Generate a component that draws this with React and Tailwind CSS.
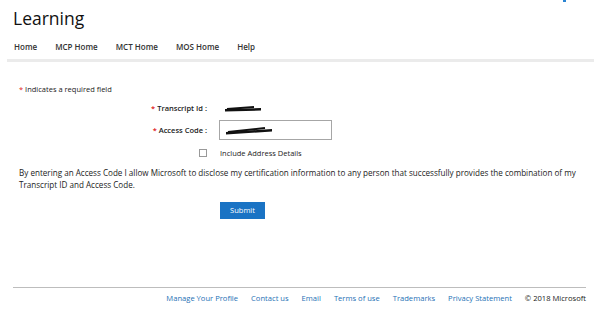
import React from "react";

const navItems = ["Home", "MCP Home", "MCT Home", "MOS Home", "Help"];
const footerLinks = [
  "Manage Your Profile",
  "Contact us",
  "Email",
  "Terms of use",
  "Trademarks",
  "Privacy Statement",
];

function Scribble({ w = 40, slant = 0 }) {
  // redacted value, drawn as a black marker stroke
  return (
    <svg width={w} height="9" viewBox={`0 0 ${w} 9`} className="block">
      <path
        d={`M1 ${5 + slant / 2} L${w - 1} ${4 - slant / 2} L${w - 1} ${6.5 - slant / 2} L1 ${7.5 + slant / 2} Z`}
        fill="#111"
      />
      <path d={`M3 ${5 + slant / 2} L${w - 8} ${3 - slant / 2}`} stroke="#111" strokeWidth="2" />
    </svg>
  );
}

export default function App() {
  return (
    <div
      className="w-[601px] h-[314px] bg-white text-[#222] relative overflow-hidden"
      style={{ fontFamily: '"Open Sans", "Noto Sans", sans-serif' }}
    >
      {/* stray blue bit at the top edge */}
      <div className="absolute left-[563px] top-0 w-[3px] h-[2px] bg-[#2a84d2]" />

      {/* Header */}
      <div className="px-[13px] pt-[4px]">
        <h1 className="text-[17.5px] leading-[28px] font-normal text-[#111]">Learning</h1>
      </div>
      <nav className="flex gap-[18px] px-[14px] mt-[9px] text-[8px] font-semibold text-[#333]">
        {navItems.map((item) => (
          <a key={item} className="leading-[12px]">
            {item}
          </a>
        ))}
      </nav>
      <div className="mx-[7px] mt-[6px] h-[3px] bg-[#ebebeb]" />

      {/* Form */}
      <div className="px-[19px] pt-[22px] text-[7.5px] text-[#222]">
        <p className="leading-[10px]">
          <span className="text-[#e02020]">*</span> Indicates a required field
        </p>

        <div className="grid grid-cols-[188px_1fr] gap-x-[12px] items-center mt-[4px]">
          <div className="text-right font-semibold leading-[20px]">
            <span className="text-[#e02020]">*</span> Transcript Id :
          </div>
          <div className="h-[20px] flex items-center pl-[5px]">
            <Scribble w={38} />
          </div>

          <div className="text-right font-semibold leading-[20px] mt-[2px]">
            <span className="text-[#e02020]">*</span> Access Code :
          </div>
          <div className="mt-[2px]">
            <div className="w-[113px] h-[20px] border border-[#a6a6a6] flex items-center pl-[5px]">
              <Scribble w={48} slant={2} />
            </div>
          </div>
        </div>

        <div className="flex items-center mt-[7px] ml-[180px] gap-[13px]">
          <span className="w-[8px] h-[8px] border border-[#999] bg-white" />
          <span className="leading-[12px]">Include Address Details</span>
        </div>

        <p className="mt-[8px] leading-[12px] text-[8.1px] w-[575px]">
          By entering an Access Code I allow Microsoft to disclose my certification
          information to any person that successfully provides the combination of my
          Transcript ID and Access Code.
        </p>

        <div className="mt-[11px] ml-[201px]">
          <button className="w-[45px] h-[17px] bg-[#1a73c4] text-white text-[7.5px] leading-[17px]">
            Submit
          </button>
        </div>
      </div>

      {/* Footer */}
      <div className="absolute left-[13px] right-[15px] bottom-[4px]">
        <div className="h-px bg-[#bdbdbd]" />
        <div className="flex justify-end items-center gap-[13px] h-[22px] text-[7.6px]">
          {footerLinks.map((l) => (
            <a key={l} className="text-[#2671b5]">
              {l}
            </a>
          ))}
          <span className="text-[#222]">© 2018 Microsoft</span>
        </div>
      </div>
    </div>
  );
}
